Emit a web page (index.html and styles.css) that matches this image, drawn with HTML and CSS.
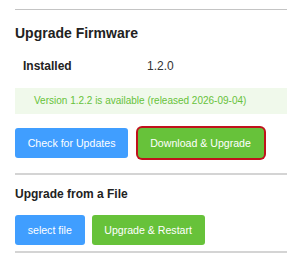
FILE: index.html
```html
<!DOCTYPE html>
<html lang="en">
<head>
    <meta charset="UTF-8">
    <meta name="viewport" content="width=device-width, initial-scale=1.0">
    <title>Upgrade Firmware</title>
    <link rel="stylesheet" href="styles.css">
</head>
<body>

    <div class="panel">
        <hr class="rule thin">

        <h2>Upgrade Firmware</h2>

        <table class="info">
            <tr>
                <th>Installed</th>
                <td>1.2.0</td>
            </tr>
        </table>

        <div class="alert">Version 1.2.2 is available (released 2026-09-04)</div>

        <div class="actions wide">
            <button class="btn blue">Check for Updates</button>
            <button class="btn green focused">Download &amp; Upgrade</button>
        </div>

        <hr class="rule">

        <h3>Upgrade from a File</h3>

        <div class="actions">
            <button class="btn blue">select file</button>
            <button class="btn green">Upgrade &amp; Restart</button>
        </div>

        <hr class="rule">
    </div>

</body>
</html>
```

FILE: styles.css
```css
body {
    margin: 0;
    background: #fff;
    font-family: 'Liberation Sans', Arial, sans-serif;
    color: #222;
}

.panel {
    width: 272px;
    margin-left: 15px;
    padding-top: 9px;
}

.rule {
    border: none;
    height: 2px;
    background: #d4d4d4;
    margin: 0;
}

.rule.thin {
    height: 1px;
    background: #c4c4c4;
}

h2 {
    font-size: 14px;
    line-height: 16px;
    margin: 15px 0 0;
}

h3 {
    font-size: 12px;
    line-height: 14px;
    margin: 12.8px 0 0;
}

.info {
    border-collapse: collapse;
    margin-top: 10px;
    font-size: 12px;
    line-height: 14px;
}

.info th {
    width: 108px;
    padding: 8px;
    text-align: left;
    color: #222;
}

.info td {
    padding: 8px;
    color: #333;
}

.alert {
    margin-top: 7px;
    padding: 7px 19px;
    background: #f0f9eb;
    color: #67c23a;
    font-size: 10px;
    line-height: 12px;
}

.actions {
    display: flex;
    align-items: center;
    gap: 7px;
    margin-top: 13.5px;
    margin-bottom: 6px;
}

.actions.wide {
    gap: 9.4px;
    margin-top: 12.7px;
    margin-bottom: 13px;
    height: 33px;
}

.btn {
    height: 30.5px;
    padding: 0 12.7px;
    border: none;
    border-radius: 3px;
    color: #fff;
    font-family: 'Liberation Sans', Arial, sans-serif;
    font-size: 10.6px;
    cursor: pointer;
}

.btn.blue {
    background: #409eff;
}

.btn.green {
    background: #67c23a;
}

.btn.focused {
    box-shadow: 0 0 0 2px #c0121c;
    border-radius: 4px;
}
```
